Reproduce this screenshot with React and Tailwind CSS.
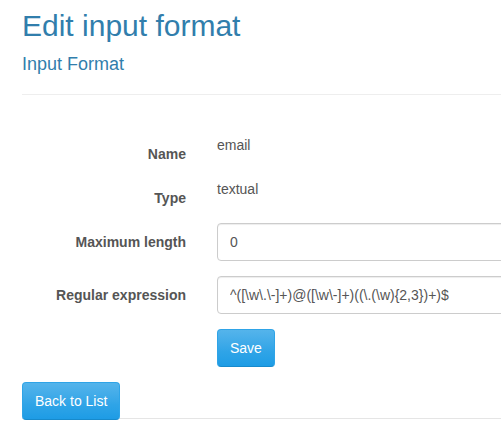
export default function App() {
  const statics = [
    { label: "Name", value: "email" },
    { label: "Type", value: "textual" },
  ];
  const fields = [
    { label: "Maximum length", value: "0" },
    { label: "Regular expression", value: "^([\\w\\.\\-]+)@([\\w\\-]+)((\\.(\\w){2,3})+)$" },
  ];
  const btn =
    "inline-flex items-center h-[38px] px-[12px] rounded-[4px] border border-[#2fa4e7] border-b-[#178acc] bg-linear-to-b from-[#54b4eb] via-[#2fa4e7] via-60% to-[#1d9ce5] text-white text-[14px] leading-[20px]";

  return (
    <div className="w-[501px] h-[421px] overflow-hidden bg-white font-['Liberation_Sans',Arial,sans-serif] text-[#555555]">
      <div className="w-[900px] pl-[22px]">
        <h1 className="mt-[9px] text-[30px] leading-[33px] text-[#317eac]">Edit input format</h1>
        <h4 className="mt-[12px] text-[18px] leading-[20px] text-[#317eac]">Input Format</h4>
        <hr className="mt-[20px] border-0 border-t border-[#eeeeee]" />

        <div className="mt-[40px]">
          {statics.map((s) => (
            <div key={s.label} className="flex mb-[15px]">
              <label className="w-[164px] shrink-0 text-right pt-[9px] text-[14px] leading-[20px] font-bold">{s.label}</label>
              <div className="ml-[31px] text-[14px] leading-[20px]">{s.value}</div>
            </div>
          ))}
          {fields.map((f) => (
            <div key={f.label} className="flex mb-[15px]">
              <label className="w-[164px] shrink-0 text-right pt-[9px] text-[14px] leading-[20px] font-bold">{f.label}</label>
              <input
                readOnly
                value={f.value}
                className="ml-[31px] w-[640px] h-[38px] px-[12px] py-[8px] border border-[#cccccc] rounded-[4px] shadow-[inset_0_1px_1px_rgba(0,0,0,0.075)] text-[14px] leading-[20px] text-[#555555] outline-none"
              />
            </div>
          ))}
          <div className="flex mb-[15px]">
            <div className="w-[164px] shrink-0" />
            <button className={`ml-[31px] ${btn}`}>Save</button>
          </div>
        </div>

        <div className="flex">
          <a className={btn}>Back to List</a>
        </div>
        <hr className="-mt-[2px] border-0 border-t border-[#e5e5e5]" />
      </div>
    </div>
  );
}
